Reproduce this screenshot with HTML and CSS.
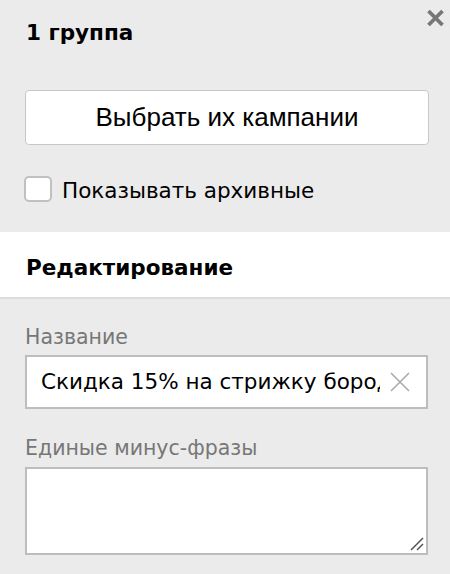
FILE: index.html
```html
<!DOCTYPE html>
<html lang="ru">
<head>
<meta charset="utf-8">
<link rel="stylesheet" href="styles.css">
</head>
<body>
<div class="panel">
  <div class="top">
    <div class="title">1 группа</div>
    <button class="close" aria-label="Закрыть">
      <svg width="19" height="18" viewBox="0 0 19 18"><path d="M2.5 2L16.5 16M16.5 2L2.5 16" stroke="#777" stroke-width="3.8"/></svg>
    </button>
    <button class="btn">Выбрать их кампании</button>
    <label class="check"><span class="box"></span><span class="check-text">Показывать архивные</span></label>
  </div>
  <div class="section">Редактирование</div>
  <div class="form">
    <div class="label">Название</div>
    <div class="input">
      <span class="value">Скидка 15% на стрижку бороды</span>
      <svg class="clear" width="20" height="20" viewBox="0 0 20 20"><path d="M1 1L19 19M19 1L1 19" stroke="#aaa" stroke-width="1.6"/></svg>
    </div>
    <div class="label label-second">Единые минус-фразы</div>
    <div class="textarea">
      <svg class="grip" width="14" height="14" viewBox="0 0 14 14"><path d="M1 13L13 1M7 13L13 7" stroke="#555" stroke-width="1.5"/></svg>
    </div>
  </div>
</div>
</body>
</html>
```
FILE: styles.css
```css
html, body {
  margin: 0;
  padding: 0;
  background: #ebebeb;
}
.panel {
  width: 450px;
  height: 574px;
  background: #ebebeb;
  font-family: "DejaVu Sans", Verdana, sans-serif;
  color: #000;
}
.top {
  position: relative;
  padding: 20px 21px 28px 25px;
}
.title {
  font-weight: bold;
  font-size: 21.5px;
  line-height: 26px;
  padding-left: 1px;
}
.close {
  position: absolute;
  top: 9px;
  right: 5px;
  border: 0;
  padding: 0;
  background: none;
  width: 19px;
  height: 18px;
  display: block;
}
.close svg {
  display: block;
}
.btn {
  display: block;
  margin-top: 44px;
  width: 404px;
  height: 55px;
  background: #fff;
  border: 1px solid #c8c8c8;
  border-radius: 4px;
  font-family: "Liberation Sans", Arial, sans-serif;
  font-size: 26px;
  color: #000;
  padding: 0;
}
.check {
  display: flex;
  align-items: flex-start;
  gap: 10px;
  margin-top: 31px;
  font-size: 21.5px;
  line-height: 26px;
}
.box {
  width: 24px;
  height: 22px;
  border: 2px solid #c0c0c0;
  border-radius: 5px;
  background: #fff;
  margin-left: -1px;
  flex: none;
}
.check-text {
  padding-top: 2px;
}
.section {
  background: #fff;
  border-bottom: 2px solid #dcdcdc;
  height: 67px;
  box-sizing: border-box;
  padding: 23px 26px 0;
  font-weight: bold;
  font-size: 21.5px;
  line-height: 26px;
}
.form {
  padding: 26px 22px 0 25px;
}
.label {
  color: #777;
  font-size: 20.5px;
  line-height: 24px;
  margin-bottom: 6px;
}
.label-second {
  margin-bottom: 7px;
}
.input {
  display: flex;
  align-items: center;
  width: 403px;
  height: 54px;
  box-sizing: border-box;
  border: 2px solid #bdbdbd;
  background: #fff;
  padding: 0 16px 0 14px;
  margin-bottom: 27px;
}
.value {
  flex: 1;
  overflow: hidden;
  white-space: nowrap;
  font-size: 21.5px;
  line-height: 26px;
}
.clear {
  flex: none;
  margin-left: 10px;
}
.textarea {
  position: relative;
  width: 403px;
  height: 88px;
  box-sizing: border-box;
  border: 2px solid #bdbdbd;
  background: #fff;
}
.grip {
  position: absolute;
  right: 2px;
  bottom: 2px;
}
```
